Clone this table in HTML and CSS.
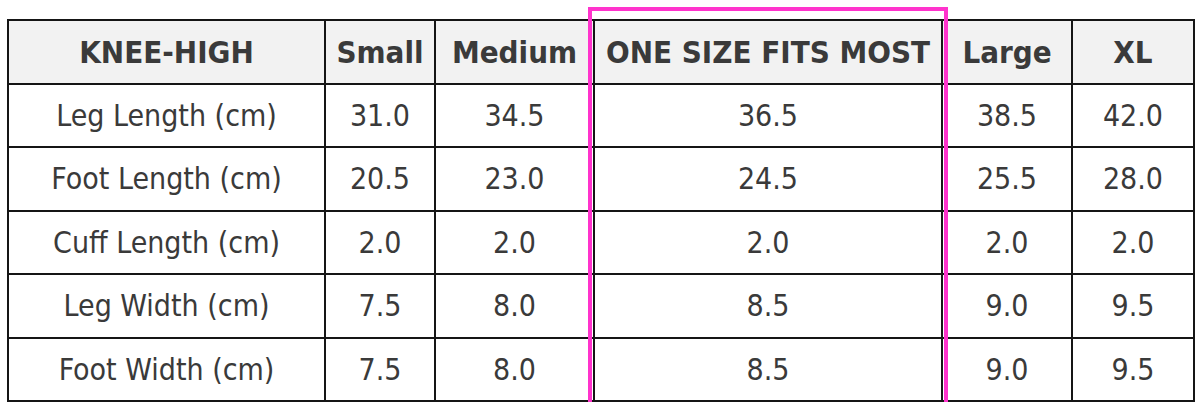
FILE: index.html
```html
<!DOCTYPE html>
<html lang="en">
<head>
  <meta charset="UTF-8" />
  <title>Knee-High Size Chart</title>
  <link rel="stylesheet" href="styles.css">
</head>
<body>
  <div class="chart">
    <table class="size-table">
      <colgroup>
        <col class="col-label">
        <col class="col-small">
        <col class="col-medium">
        <col class="col-onesize">
        <col class="col-large">
        <col class="col-xl">
      </colgroup>
      <thead>
        <tr>
          <th>KNEE-HIGH</th>
          <th>Small</th>
          <th>Medium</th>
          <th>ONE SIZE FITS MOST</th>
          <th>Large</th>
          <th>XL</th>
        </tr>
      </thead>
      <tbody>
        <tr><td>Leg Length (cm)</td><td>31.0</td><td>34.5</td><td>36.5</td><td>38.5</td><td>42.0</td></tr>
        <tr><td>Foot Length (cm)</td><td>20.5</td><td>23.0</td><td>24.5</td><td>25.5</td><td>28.0</td></tr>
        <tr><td>Cuff Length (cm)</td><td>2.0</td><td>2.0</td><td>2.0</td><td>2.0</td><td>2.0</td></tr>
        <tr><td>Leg Width (cm)</td><td>7.5</td><td>8.0</td><td>8.5</td><td>9.0</td><td>9.5</td></tr>
        <tr><td>Foot Width (cm)</td><td>7.5</td><td>8.0</td><td>8.5</td><td>9.0</td><td>9.5</td></tr>
      </tbody>
    </table>
    <div class="highlight"></div>
  </div>
</body>
</html>
```

FILE: styles.css
```css
body {
  margin: 0;
  background: #fff;
  font-family: 'DejaVu Sans Condensed', 'DejaVu Sans', sans-serif;
  color: #3a3a3a;
}

.chart {
  position: relative;
  padding: 19px 5px 0 7px;
}

.size-table {
  width: 100%;
  border-collapse: collapse;
  border: 2px solid #151515;
  table-layout: fixed;
}

.col-label { width: 317px; }
.col-small { width: 110px; }
.col-medium { width: 159px; }
.col-onesize { width: 348px; }
.col-large { width: 130px; }
.col-xl { width: 122px; }

.size-table th,
.size-table td {
  border: 2px solid #151515;
  text-align: center;
  padding: 0;
  height: 61.5px;
  font-size: 30px;
}

.size-table th {
  background: #f2f2f2;
  font-weight: bold;
  font-size: 31px;
}

.size-table td {
  font-weight: normal;
}

.highlight {
  position: absolute;
  left: 588px;
  top: 7px;
  width: 352px;
  height: 397px;
  border: 4px solid #ff33cc;
  pointer-events: none;
}
```
